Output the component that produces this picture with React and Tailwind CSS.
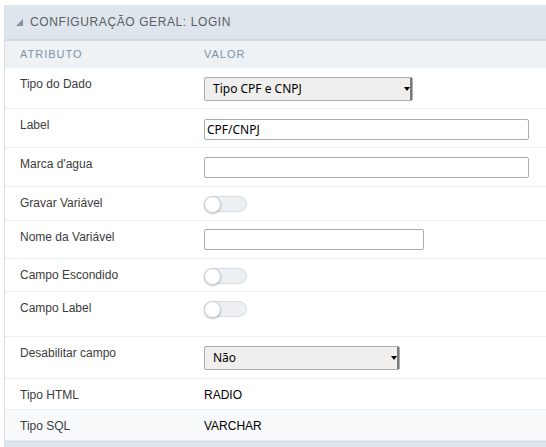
const Toggle = () => (
  <div className="relative w-[43px] h-[16px] rounded-full bg-[#edf0f3] border border-[#d6dce2]">
    <div className="absolute -left-[1px] -top-[1px] w-[17px] h-[17px] rounded-full bg-white border border-[#c9cfd6] shadow-[0_1px_2px_rgba(0,0,0,0.25)]" />
  </div>
);

const Select = ({ value, width }) => (
  <div
    className={`flex items-center h-[24px] ${width} bg-[#f0efee] border border-[#a9adb2] rounded-[2px] font-['Noto_Sans',sans-serif] text-[12px] text-black`}
  >
    <span className="flex-1 pl-[8px] leading-none">{value}</span>
    <div className="flex items-center justify-center w-[8px] h-full border-r-2 border-[#7a7a7a]">
      <span className="w-0 h-0 border-l-[3px] border-r-[3px] border-t-[4px] border-l-transparent border-r-transparent border-t-black" />
    </div>
  </div>
);

const TextInput = ({ value = '', width }) => (
  <div
    className={`flex items-center h-[21px] ${width} bg-white border border-[#a6adb5] rounded-[2px] pl-[2px] font-['Noto_Sans',sans-serif] text-[12px] text-black`}
  >
    {value}
  </div>
);

const Row = ({ label, height, children, shaded, valueTop = 'pt-[9px]' }) => (
  <div
    className={`grid grid-cols-[199px_1fr] border-b border-[#eceff2] ${height} ${shaded ? 'bg-[#f7f9fb]' : 'bg-white'}`}
  >
    <div className="pl-[15px] pt-[9px] text-[12px] leading-[14px] text-[#3c3c3c]">{label}</div>
    <div className={valueTop}>{children}</div>
  </div>
);

const Value = ({ children }) => (
  <div className="text-[12px] leading-[14px] text-black font-medium">{children}</div>
);

export default function App() {
  return (
    <div className="w-[546px] h-[447px] bg-white pt-[5px] pl-[4px] overflow-hidden font-['Liberation_Sans',Arial,sans-serif]">
      <div className="border-l border-[#d9dfe5] h-full">
        {/* Header */}
        <div className="flex items-center gap-[7px] h-[36px] bg-[#dfe5ec] border-b-2 border-[#d0d8e0] pl-[11px]">
          <span className="w-0 h-0 border-b-[7px] border-l-[7px] border-b-[#8a9098] border-l-transparent" />
          <span className="text-[12px] uppercase tracking-[0.6px] text-[#5a5e63]">Configuração Geral: Login</span>
        </div>

        {/* Column header */}
        <div className="grid grid-cols-[199px_1fr] items-center h-[27px] bg-[#eef2f5] text-[11px] uppercase tracking-[1px] text-[#7c93a6]">
          <span className="pl-[15px]">Atributo</span>
          <span>Valor</span>
        </div>

        <Row label="Tipo do Dado" height="h-[41px]">
          <Select value="Tipo CPF e CNPJ" width="w-[209px]" />
        </Row>
        <Row label="Label" height="h-[39px]" valueTop="pt-[10px]">
          <TextInput value="CPF/CNPJ" width="w-[325px]" />
        </Row>
        <Row label="Marca d'agua" height="h-[39px]">
          <TextInput width="w-[325px]" />
        </Row>
        <Row label="Gravar Variável" height="h-[34px]">
          <Toggle />
        </Row>
        <Row label="Nome da Variável" height="h-[38px]" valueTop="pt-[8px]">
          <TextInput width="w-[220px]" />
        </Row>
        <Row label="Campo Escondido" height="h-[33px]">
          <Toggle />
        </Row>
        <Row label="Campo Label" height="h-[45px]">
          <Toggle />
        </Row>
        <Row label="Desabilitar campo" height="h-[42px]">
          <Select value="Não" width="w-[196px]" />
        </Row>
        <Row label="Tipo HTML" height="h-[31px]">
          <Value>RADIO</Value>
        </Row>
        <Row label="Tipo SQL" height="h-[31px]" shaded>
          <Value>VARCHAR</Value>
        </Row>

        <div className="h-[10px] bg-[#dfe5ec] border-t border-[#d0d8e0]" />
      </div>
    </div>
  );
}
